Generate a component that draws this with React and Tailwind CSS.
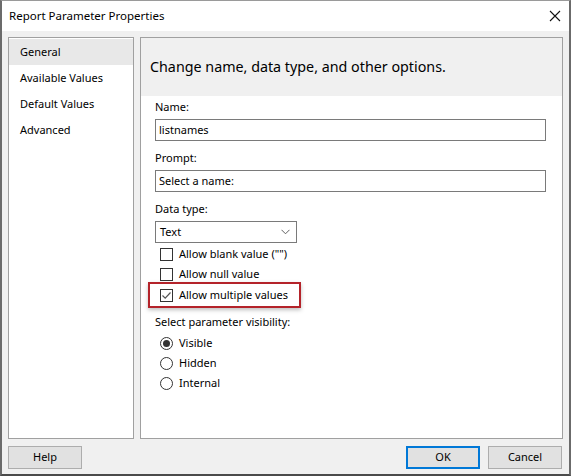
import React from 'react';

const font = { fontFamily: '"Noto Sans", "Open Sans", sans-serif' };

const Check = ({ checked, label }) => (
  <div className="flex items-center h-[20px] pl-[5px]">
    <div className="w-[13px] h-[13px] border border-[#333333] bg-white flex items-center justify-center">
      {checked && (
        <svg width="11" height="11" viewBox="0 0 11 11">
          <polyline points="1.5,5.5 4.2,8.2 9.5,2.5" fill="none" stroke="#555555" strokeWidth="1.2" />
        </svg>
      )}
    </div>
    <span className="ml-[6px]">{label}</span>
  </div>
);

const Radio = ({ checked, label }) => (
  <div className="flex items-center h-[20px] pl-[5px]">
    <div className="w-[13px] h-[13px] rounded-full border border-[#333333] bg-white flex items-center justify-center">
      {checked && <div className="w-[7px] h-[7px] rounded-full bg-[#333333]" />}
    </div>
    <span className="ml-[6px]">{label}</span>
  </div>
);

const App = () => {
  const navItems = ['General', 'Available Values', 'Default Values', 'Advanced'];

  return (
    <div
      className="w-[571px] h-[476px] flex flex-col bg-[#f0f0f0] border-x-2 border-b-2 border-t border-x-[#6b6b6b] border-b-[#4a4a4a] border-t-[#9a9a9a] text-[11px] text-black overflow-hidden"
      style={font}
    >
      <div className="h-[30px] bg-white flex items-center justify-between pl-[7px] pr-[8px] shrink-0">
        <span className="text-[11.5px]">Report Parameter Properties</span>
        <svg width="12" height="12" viewBox="0 0 12 12">
          <path d="M1 1 L11 11 M11 1 L1 11" stroke="#111111" strokeWidth="1.1" />
        </svg>
      </div>

      <div className="flex-1 flex flex-col px-[6px] pt-[6px]">
        <div className="flex gap-[6px] h-[402px]">
          <div className="w-[126px] bg-white border border-[#a0a0a0] flex flex-col pt-[1px]">
            {navItems.map((item, i) => (
              <div
                key={item}
                className={`h-[26px] flex items-center pl-[11px] ${i === 0 ? 'bg-[#e8e8e8]' : ''}`}
              >
                {item}
              </div>
            ))}
          </div>

          <div className="flex-1 bg-white border border-[#a0a0a0] flex flex-col">
            <div className="h-[58px] bg-[#f0f0f0] flex items-center pl-[9px] text-[14.3px]">
              Change name, data type, and other options.
            </div>
            <div className="flex flex-col pl-[14px] pr-[16px] pt-[4px]">
              <div className="h-[14px] leading-[14px]">Name:</div>
              <div className="mt-[5px] h-[22px] border border-[#7a7a7a] flex items-center pl-[3px]">listnames</div>
              <div className="mt-[10px] h-[14px] leading-[14px]">Prompt:</div>
              <div className="mt-[5px] h-[22px] border border-[#7a7a7a] flex items-center pl-[3px]">Select a name:</div>
              <div className="mt-[10px] h-[14px] leading-[14px]">Data type:</div>
              <div className="mt-[5px] w-[142px] h-[22px] border border-[#7a7a7a] flex items-center justify-between pl-[4px] pr-[6px]">
                <span>Text</span>
                <svg width="9" height="6" viewBox="0 0 9 6">
                  <polyline points="0.5,0.8 4.5,4.8 8.5,0.8" fill="none" stroke="#606060" strokeWidth="1" />
                </svg>
              </div>
              <div className="mt-[1px]">
                <Check label={'Allow blank value ("")'} />
                <Check label="Allow null value" />
                <div className="-ml-[7px] w-[153px] h-[26px] -mt-[2px] border-2 border-[#b4232a] shadow-[0_2px_4px_rgba(0,0,0,0.25)] flex items-center pl-[5px]">
                  <Check checked label="Allow multiple values" />
                </div>
              </div>
              <div className="mt-[7px] h-[14px] leading-[14px]">Select parameter visibility:</div>
              <div className="mt-[4px]">
                <Radio checked label="Visible" />
                <Radio label="Hidden" />
                <Radio label="Internal" />
              </div>
            </div>
          </div>
        </div>

        <div className="flex items-center justify-between mt-[7px]">
          <button className="w-[74px] h-[23px] bg-[#e1e1e1] border border-[#adadad]">Help</button>
          <div className="flex gap-[8px] pr-[1px]">
            <button className="w-[74px] h-[23px] bg-[#e1e1e1] border-2 border-[#0078d7]">OK</button>
            <button className="w-[74px] h-[23px] bg-[#e1e1e1] border border-[#adadad]">Cancel</button>
          </div>
        </div>
      </div>
    </div>
  );
};

export default App;
